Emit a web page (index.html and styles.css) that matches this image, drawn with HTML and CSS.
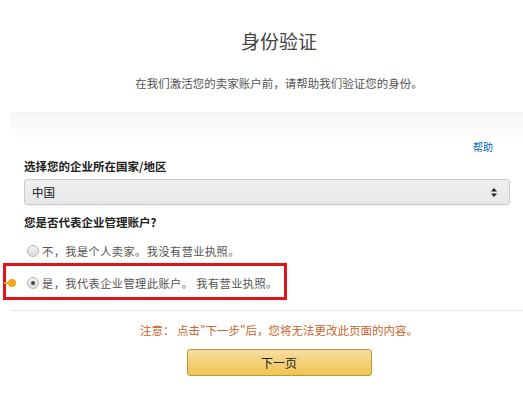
FILE: index.html
```html
<!DOCTYPE html>
<html lang="zh-CN">
<head>
    <meta charset="UTF-8">
    <meta name="viewport" content="width=device-width, initial-scale=1.0">
    <title>身份验证</title>
    <link rel="stylesheet" href="styles.css">
</head>
<body>
    <div class="page">
        <div class="header">
            <h1>身份验证</h1>
            <p class="subtitle">在我们激活您的卖家账户前，请帮助我们验证您的身份。</p>
        </div>
        <div class="panel">
            <div class="form">
                <div class="help-row"><a class="help" href="#">帮助</a></div>
                <label class="field-label">选择您的企业所在国家/地区</label>
                <div class="select">
                    <span>中国</span>
                    <svg class="arrows" width="6" height="9" viewBox="0 0 6 9">
                        <path d="M3 0 L6 3.5 L0 3.5 Z M0 5.5 L6 5.5 L3 9 Z" fill="#222"/>
                    </svg>
                </div>
                <label class="field-label question">您是否代表企业管理账户?</label>
                <div class="radio-row first">
                    <span class="radio"></span>
                    <span>不，我是个人卖家。我没有营业执照。</span>
                </div>
                <div class="radio-row">
                    <span class="radio checked"></span>
                    <span>是，我代表企业管理此账户。 我有营业执照。</span>
                </div>
            </div>
            <div class="divider"></div>
            <p class="note">注意： 点击"下一步"后，您将无法更改此页面的内容。</p>
            <div class="actions">
                <button class="next">下一页</button>
            </div>
        </div>
    </div>
    <div class="highlight"></div>
    <div class="pointer"></div>
</body>
</html>
```

FILE: styles.css
```css
html, body {
    margin: 0;
    padding: 0;
    background-color: #fff;
    overflow: hidden;
}

body {
    font-family: "Noto Sans CJK SC", sans-serif;
    color: #333;
    position: relative;
    height: 410px;
}

.page {
    width: 538px;
    margin-left: 10px;
}

.header {
    text-align: center;
    padding-top: 29px;
}

.header h1 {
    margin: 0;
    font-size: 19px;
    line-height: 24px;
    font-weight: normal;
    color: #444;
}

.subtitle {
    margin: 22px 0 0;
    font-size: 11.5px;
    line-height: 16px;
    color: #555;
}

.panel {
    margin-top: 21px;
    padding-top: 25px;
    border-top: 1px solid #f2f2f2;
    background: linear-gradient(#f6f6f6, #fff 28px);
}

.form {
    padding: 0 38px 0 14px;
}

.help-row {
    text-align: right;
    padding-right: 17px;
    line-height: 14px;
    margin-top: -1px;
}

.help {
    font-size: 10px;
    color: #0066c0;
    text-decoration: none;
}

.field-label {
    display: block;
    margin-top: 4px;
    font-size: 11.5px;
    line-height: 16px;
    font-weight: bold;
    color: #222;
}

.field-label.question {
    margin-top: 9px;
}

.select {
    margin-top: 5px;
    height: 24px;
    border: 1px solid #c9cacc;
    border-radius: 3px;
    background: linear-gradient(#eeeff1, #e7e8ea);
    box-shadow: 0 1px 0 rgba(0, 0, 0, 0.04);
    display: flex;
    align-items: center;
    justify-content: space-between;
    padding: 0 12px 0 7px;
    font-size: 11.5px;
    color: #111;
}

.radio-row {
    display: flex;
    align-items: center;
    gap: 3px;
    height: 20px;
    margin-top: 12px;
    padding-left: 3px;
    font-size: 11.2px;
    letter-spacing: 0.45px;
    color: #555;
}

.radio-row.first {
    margin-top: 11px;
}

.radio {
    width: 10px;
    height: 10px;
    border: 1px solid #b4b4b4;
    border-radius: 50%;
    background: linear-gradient(#f4f4f4, #dcdcdc);
    display: flex;
    align-items: center;
    justify-content: center;
}

.radio.checked::after {
    content: "";
    width: 4px;
    height: 4px;
    border-radius: 50%;
    background-color: #444;
}

.divider {
    margin-top: 17px;
    height: 1px;
    background-color: #e7e7e7;
}

.note {
    margin: 11px 0 0;
    text-align: center;
    font-size: 11.5px;
    line-height: 16px;
    color: #c7652a;
}

.actions {
    margin-top: 11px;
    display: flex;
    justify-content: center;
}

.next {
    width: 185px;
    height: 27px;
    border: 1px solid #b8973f;
    border-radius: 3px;
    background: linear-gradient(#f7dea2, #f0c450);
    font-family: "Noto Sans CJK SC", sans-serif;
    font-size: 12px;
    color: #222;
    cursor: pointer;
}

/* annotation overlay */
.highlight {
    position: absolute;
    left: 3px;
    top: 263px;
    width: 278px;
    height: 31px;
    border: 3px solid #e3131b;
}

.pointer {
    position: absolute;
    left: 8px;
    top: 279px;
    width: 8px;
    height: 8px;
    border-radius: 50%;
    background-color: #f7a21b;
}

.pointer::before {
    content: "";
    position: absolute;
    left: -4px;
    top: 3px;
    width: 5px;
    height: 2px;
    background-color: #f7a21b;
}
```
